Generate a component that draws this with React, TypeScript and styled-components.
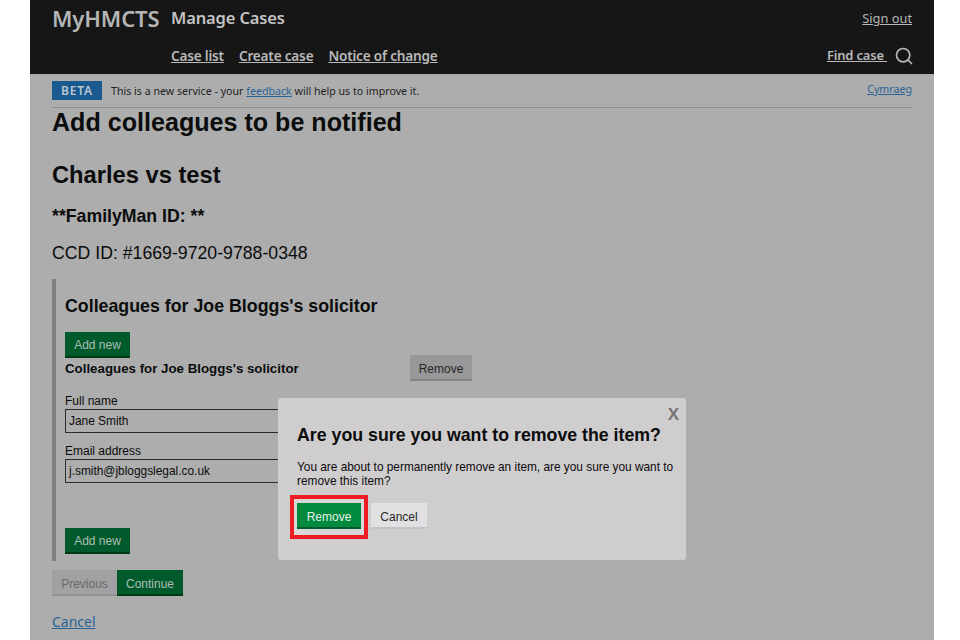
import React from "react";
import styled, { createGlobalStyle } from "styled-components";
import { Search } from "lucide-react";

const GlobalStyle = createGlobalStyle`
  html, body {
    margin: 0;
    padding: 0;
    background: #fff;
    overflow: hidden;
  }
`;

const Page = styled.div`
  position: relative;
  width: 904px;
  height: 640px;
  margin-left: 30px;
  background-color: #adadad;
  overflow: hidden;
  font-family: "Liberation Sans", Arial, sans-serif;
  color: #0b0c0c;
`;

const Header = styled.header`
  height: 74px;
  background-color: #161616;
  padding: 0 22px;
  display: grid;
  grid-template-columns: 119px 1fr auto;
  grid-template-rows: 36px 38px;
  box-sizing: border-box;
  font-family: "Noto Sans", sans-serif;
  color: #c9c9c9;
`;

const Brand = styled.div`
  font-size: 22px;
  font-weight: 600;
  line-height: 36px;
  letter-spacing: -0.1px;
  color: #b5b5b5;
`;

const Service = styled.div`
  font-size: 16.5px;
  font-weight: 600;
  line-height: 36px;
  letter-spacing: -0.15px;
  color: #c4c4c4;
`;

const SignOut = styled.a`
  font-size: 12.8px;
  line-height: 36px;
  color: #b5b5b5;
  text-decoration: underline;
  text-align: right;
`;

const Nav = styled.nav`
  grid-column: 2;
  display: flex;
  gap: 15px;
  align-items: center;
  height: 38px;
`;

const NavLink = styled.a`
  font-size: 13.6px;
  font-weight: 600;
  letter-spacing: -0.2px;
  color: #b9b9b9;
  text-decoration: underline;
`;

const FindLink = styled(NavLink)`
  font-size: 13px;
`;

const FindCase = styled.div`
  grid-column: 3;
  display: flex;
  align-items: center;
  justify-content: flex-end;
  gap: 7px;
  height: 38px;
`;

const SearchIcon = styled(Search)`
  margin: 1px -2px 0 0;
`;

const Main = styled.main`
  padding: 0 22px;
`;

const PhaseBanner = styled.div`
  height: 34px;
  box-sizing: border-box;
  padding-top: 7px;
  border-bottom: 1px solid #8f8f8f;
  display: flex;
  align-items: flex-start;
  font-family: "Noto Sans", sans-serif;
  font-size: 10.65px;
  color: #1f1f1f;
`;

const BetaTag = styled.strong`
  width: 50px;
  height: 19px;
  background-color: #1a5a8e;
  color: #b9c6d2;
  font-size: 12px;
  font-weight: 600;
  letter-spacing: 0.8px;
  line-height: 19px;
  text-align: center;
  margin-right: 9px;
`;

const BannerText = styled.span`
  line-height: 20px;
  flex: 1;
`;

const BlueLink = styled.a`
  color: #2a6296;
  text-decoration: underline;
`;

const Language = styled(BlueLink)`
  line-height: 17px;
`;

const Title = styled.h1`
  margin: -1px 0 0;
  font-size: 25.1px;
  line-height: 30px;
  font-weight: 700;
`;

const CaseName = styled.h2`
  margin: 23px 0 0;
  font-size: 23.7px;
  line-height: 30px;
  font-weight: 700;
`;

const FamilyMan = styled.h3`
  margin: 15px 0 0;
  font-size: 17.7px;
  line-height: 22px;
  font-weight: 700;
`;

const CcdId = styled.p`
  margin: 14px 0 0;
  font-size: 17.7px;
  line-height: 24px;
`;

const Panel = styled.section`
  margin-top: 14px;
  height: 282px;
  box-sizing: border-box;
  border-left: 4px solid #808080;
  padding: 15px 0 0 9px;
  display: flex;
  flex-direction: column;
  align-items: flex-start;
`;

const PanelTitle = styled.h2`
  margin: 0;
  font-size: 17.8px;
  line-height: 24px;
  font-weight: 700;
`;

type Tone = "green" | "grey" | "dim" | "light" | "bright";

const toneColors: Record<Tone, { bg: string; edge: string; text: string }> = {
  green: { bg: "#005a2c", edge: "#003a14", text: "#aebdb3" },
  bright: { bg: "#008a3e", edge: "#005a2b", text: "#e4f1e8" },
  grey: { bg: "#98989a", edge: "#858587", text: "#262626" },
  dim: { bg: "#a1a1a3", edge: "#929294", text: "#6a6a6a" },
  light: { bg: "#e1e1e3", edge: "#c4c4c6", text: "#262626" },
};

const Button = styled.button<{ $tone: Tone }>`
  height: 26px;
  padding: 3px 0 0;
  border: 0;
  border-bottom: 2px solid ${(p) => toneColors[p.$tone].edge};
  box-sizing: border-box;
  font-family: "Liberation Sans", Arial, sans-serif;
  font-size: 12px;
  background-color: ${(p) => toneColors[p.$tone].bg};
  color: ${(p) => toneColors[p.$tone].text};
`;

const AddNew = styled(Button)`
  margin-top: 14px;
  width: 65px;
  padding-top: 1px;
`;

const ItemHeader = styled.div`
  width: 407px;
  display: flex;
  justify-content: space-between;
  align-items: flex-start;
  margin-top: -3px;
`;

const ItemRemove = styled(Button)`
  width: 62px;
`;

const ItemTitle = styled.h3`
  margin: 0;
  padding-top: 4px;
  font-size: 13.3px;
  line-height: 20px;
  font-weight: 700;
`;

const Label = styled.label`
  margin-top: 13px;
  font-size: 12px;
  line-height: 15px;
`;

const SecondLabel = styled(Label)`
  margin-top: 11px;
`;

const TextInput = styled.div`
  width: 400px;
  height: 24px;
  box-sizing: border-box;
  border: 1px solid #2b2b2b;
  padding-left: 3px;
  font-size: 11.9px;
  line-height: 22px;
`;

const BottomAdd = styled(AddNew)`
  margin-top: 45px;
`;

const Actions = styled.div`
  display: flex;
  margin-top: 9px;
`;

const PreviousButton = styled(Button)`
  width: 65px;
`;

const ContinueButton = styled(Button)`
  width: 66px;
`;

const CancelLink = styled(BlueLink)`
  display: block;
  margin-top: 16px;
  font-family: "Noto Sans", sans-serif;
  font-size: 14px;
  line-height: 20px;
  width: fit-content;
`;

const Modal = styled.div`
  position: absolute;
  left: 248px;
  top: 398px;
  width: 408px;
  height: 162px;
  box-sizing: border-box;
  padding: 24px 10px 0 19px;
  background-color: #cfcdce;
  border-radius: 3px;
  display: flex;
  flex-direction: column;
  align-items: flex-start;
`;

const CloseMark = styled.span`
  position: absolute;
  top: 7px;
  right: 7px;
  font-size: 17px;
  line-height: 20px;
  font-weight: 700;
  color: #757575;
`;

const ModalTitle = styled.h2`
  margin: 0;
  font-size: 17.75px;
  line-height: 26px;
  font-weight: 700;
  white-space: nowrap;
`;

const ModalText = styled.p`
  margin: 12px 0 0;
  font-size: 11.85px;
  line-height: 14px;
`;

const ModalActions = styled.div`
  display: flex;
  align-items: flex-start;
  margin-top: 7px;
  margin-left: -7px;
`;

const Highlight = styled.div`
  width: 78px;
  height: 44px;
  box-sizing: border-box;
  border: 4px solid #ed1c24;
  padding: 4px 3px;
  background-color: #d9d8d9;
  margin-right: 3px;
`;

const ConfirmButton = styled(Button)`
  width: 64px;
`;

const DismissButton = styled(Button)`
  width: 56px;
  margin-top: 8px;
`;

export default function App() {
  return (
    <>
      <GlobalStyle />
      <Page>
        <Header>
          <Brand>MyHMCTS</Brand>
          <Service>Manage Cases</Service>
          <SignOut href="#">Sign out</SignOut>
          <Nav>
            <NavLink href="#">Case list</NavLink>
            <NavLink href="#">Create case</NavLink>
            <NavLink href="#">Notice of change</NavLink>
          </Nav>
          <FindCase>
            <FindLink href="#">Find case&nbsp;</FindLink>
            <SearchIcon size={20} color="#b9b9b9" strokeWidth={2} />
          </FindCase>
        </Header>
        <Main>
          <PhaseBanner>
            <BetaTag>BETA</BetaTag>
            <BannerText>
              This is a new service - your <BlueLink href="#">feedback</BlueLink> will help us to improve it.
            </BannerText>
            <Language href="#">Cymraeg</Language>
          </PhaseBanner>
          <Title>Add colleagues to be notified</Title>
          <CaseName>Charles vs test</CaseName>
          <FamilyMan>**FamilyMan ID: **</FamilyMan>
          <CcdId>CCD ID: #1669-9720-9788-0348</CcdId>
          <Panel>
            <PanelTitle>Colleagues for Joe Bloggs's solicitor</PanelTitle>
            <AddNew $tone="green">Add new</AddNew>
            <ItemHeader>
              <ItemTitle>Colleagues for Joe Bloggs's solicitor</ItemTitle>
              <ItemRemove $tone="grey">Remove</ItemRemove>
            </ItemHeader>
            <Label>Full name</Label>
            <TextInput>Jane Smith</TextInput>
            <SecondLabel>Email address</SecondLabel>
            <TextInput>j.smith@jbloggslegal.co.uk</TextInput>
            <BottomAdd $tone="green">Add new</BottomAdd>
          </Panel>
          <Actions>
            <PreviousButton $tone="dim">Previous</PreviousButton>
            <ContinueButton $tone="green">Continue</ContinueButton>
          </Actions>
          <CancelLink href="#">Cancel</CancelLink>
        </Main>
        <Modal>
          <CloseMark>X</CloseMark>
          <ModalTitle>Are you sure you want to remove the item?</ModalTitle>
          <ModalText>
            You are about to permanently remove an item, are you sure you want to remove this item?
          </ModalText>
          <ModalActions>
            <Highlight>
              <ConfirmButton $tone="bright">Remove</ConfirmButton>
            </Highlight>
            <DismissButton $tone="light">Cancel</DismissButton>
          </ModalActions>
        </Modal>
      </Page>
    </>
  );
}
